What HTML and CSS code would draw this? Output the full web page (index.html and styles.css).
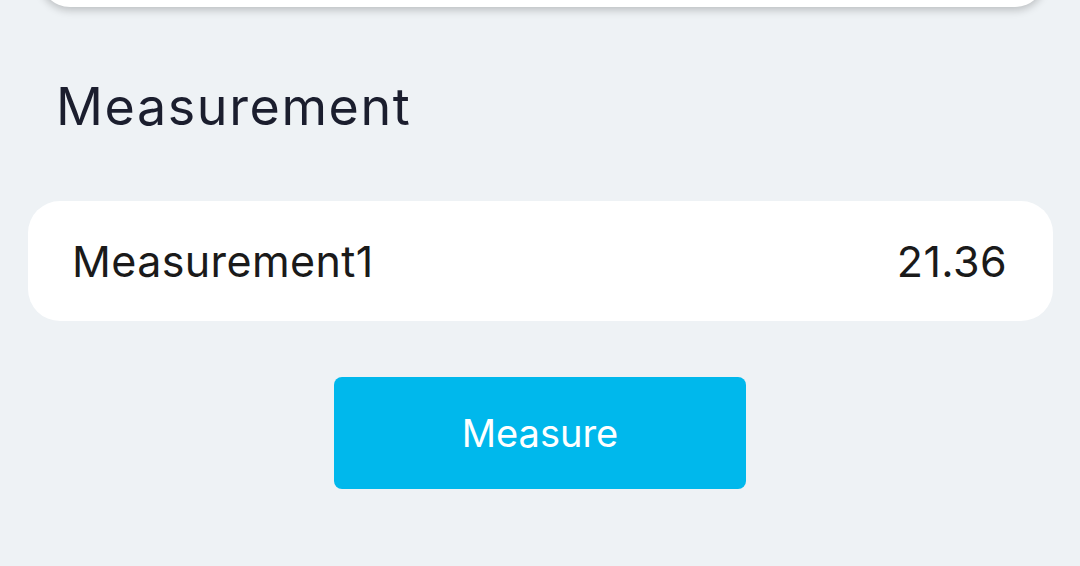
FILE: index.html
```html
<!DOCTYPE html>
<html lang="en">
<head>
  <meta charset="UTF-8">
  <meta name="viewport" content="width=device-width, initial-scale=1.0">
  <title>Measurement</title>
  <link rel="stylesheet" href="styles.css">
</head>
<body>

  <div class="top-card"></div>

  <h1 class="section-title">Measurement</h1>

  <div class="result-card">
    <span class="result-name">Measurement1</span>
    <span class="result-value">21.36</span>
  </div>

  <div class="button-container">
    <button type="button" class="measure-btn">Measure</button>
  </div>

</body>
</html>
```

FILE: styles.css
```css
* {
  box-sizing: border-box;
}
body {
  margin: 0;
  font-family: Inter, "Noto Sans", sans-serif;
  background: #eef2f5;
  color: #1a1a1a;
  overflow: hidden;
}
.top-card {
  height: 60px;
  margin: -53px 35px 0 40px;
  background: #fff;
  border-radius: 30px;
  box-shadow: 0 3px 8px rgba(0, 0, 0, 0.22);
}
.section-title {
  margin: 62px 0 0 56px;
  font-size: 52px;
  font-weight: 400;
  letter-spacing: 1.6px;
  line-height: 76px;
  color: #1b1e2e;
}
.result-card {
  margin: 56px 27px 0 28px;
  height: 120px;
  background: #fff;
  border-radius: 32px;
  display: flex;
  align-items: center;
  justify-content: space-between;
  padding: 0 46px 0 44px;
  font-size: 43px;
  letter-spacing: 0.4px;
  color: #1a1a1a;
}
.button-container {
  display: flex;
  justify-content: center;
  margin-top: 56px;
}
.measure-btn {
  width: 412px;
  height: 112px;
  background-color: #00b8ec;
  color: #fff;
  border: none;
  border-radius: 8px;
  font-family: inherit;
  font-size: 38px;
  padding: 0;
}
```
